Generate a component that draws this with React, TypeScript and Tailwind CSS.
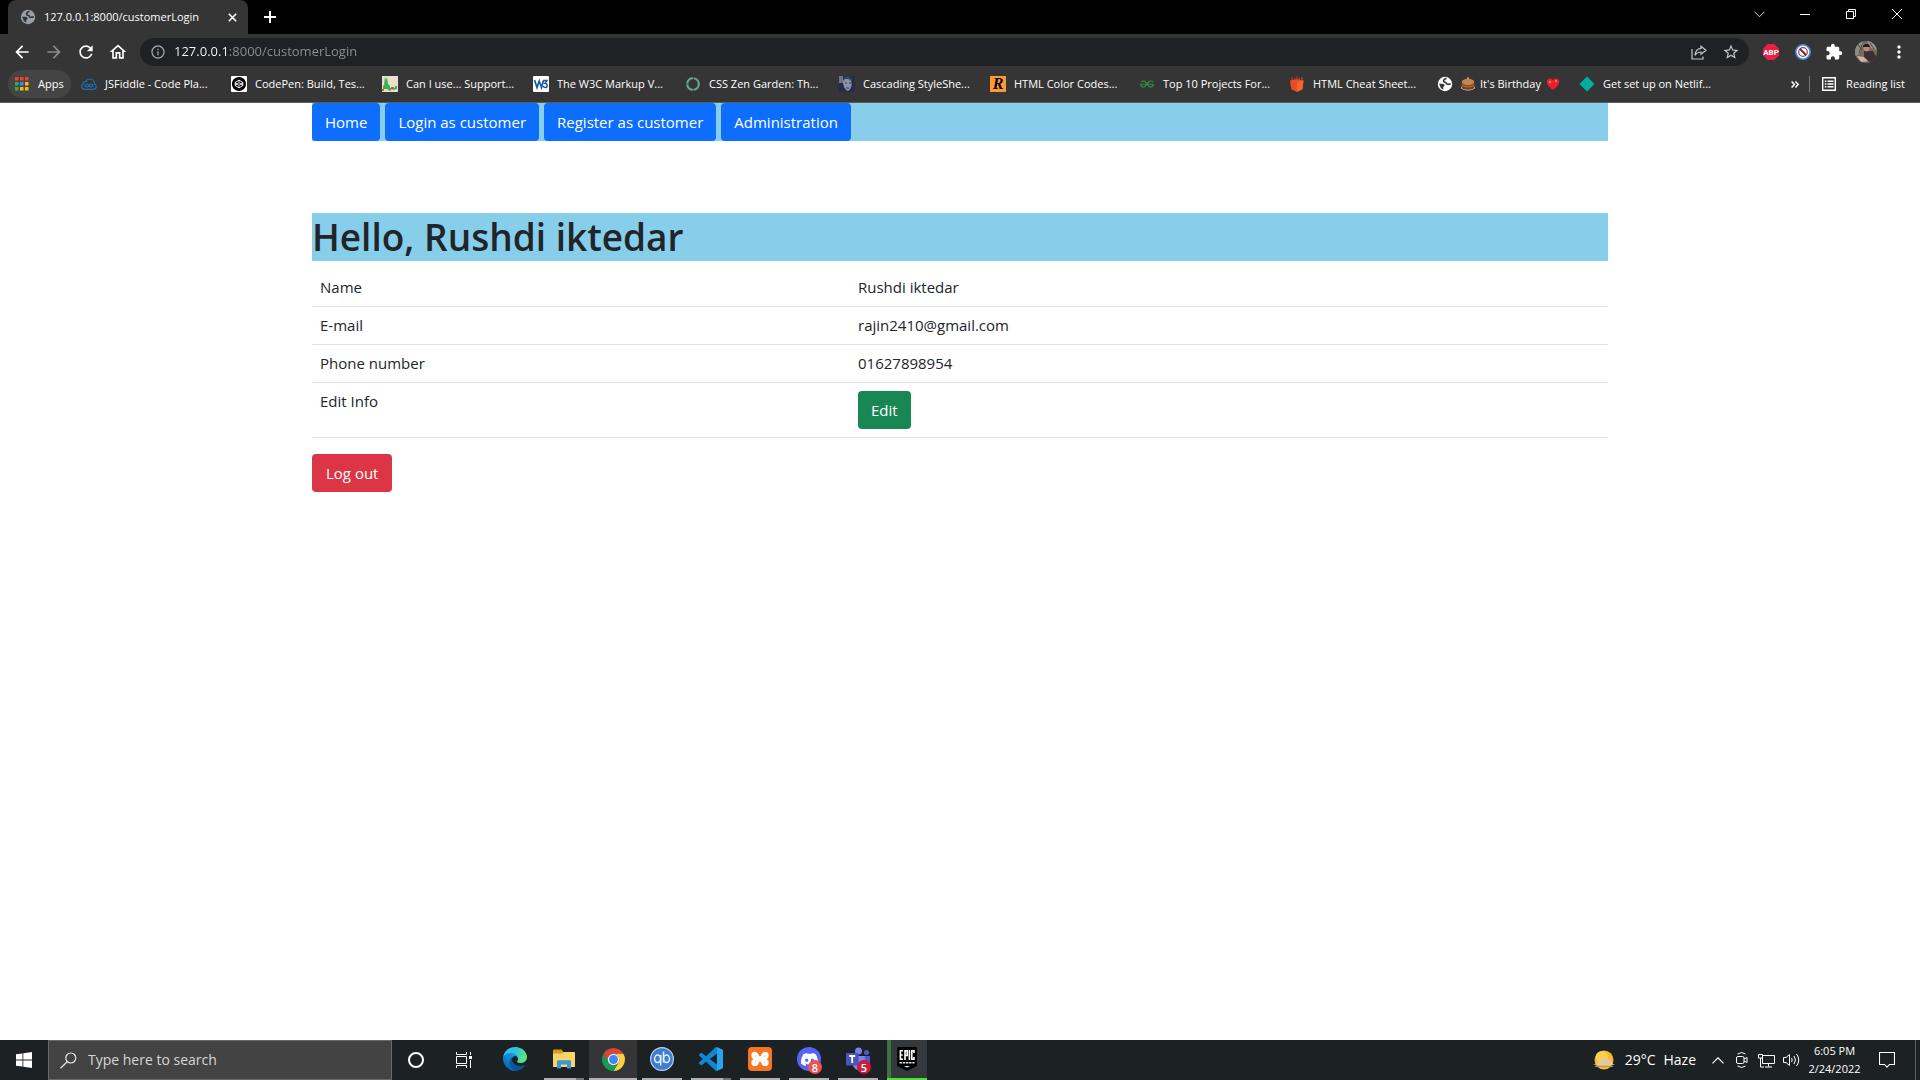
import type { ReactNode } from "react";
import {
  MdArrowBack,
  MdArrowForward,
  MdRefresh,
  MdOutlineHome,
  MdExtension,
  MdStarOutline,
  MdMoreVert,
  MdInfoOutline,
} from "react-icons/md";
import { SiCodepen, SiGeeksforgeeks, SiDiscord, SiXampp } from "react-icons/si";

function Globe({ size, color, ink }: { size: number; color: string; ink: string }) {
  return (
    <svg width={size} height={size} viewBox="0 0 16 16" className="shrink-0">
      <circle cx="8" cy="8" r="7.200" fill={color} />
      <path d="M9.500 2.300C7.500 3 6.300 4 6.600 5.200c.3 1.300 2.700.6 2.800 2.200 0 1.300 2.500 1 4.300.4" fill="none" stroke={ink} strokeWidth="1.600" />
      <path d="M2 7.800c2-.3 5.500-.2 5.700 1.400.1 1-1.400 1-1.500 2.100 0 1 .3 1.500.1 2.300L4 12.200z" fill={ink} />
    </svg>
  );
}

function AppsGrid() {
  const colors = ["#ea4335", "#ea4335", "#ea4335", "#34a853", "#4285f4", "#fbbc05", "#34a853", "#fbbc05", "#fbbc05"];
  return (
    <svg width="14" height="14" viewBox="0 0 14 14">
      {colors.map((c, i) => (
        <rect key={i} x={(i % 3) * 5} y={Math.floor(i / 3) * 5} width="3.500" height="3.500" fill={c} />
      ))}
    </svg>
  );
}

function JsFiddleIcon() {
  return (
    <svg width="16" height="16" viewBox="0 0 16 16" fill="none" stroke="#1f6fb5" strokeWidth="1.200">
      <path d="M3.800 13.300h8.500c1.700 0 3-1.200 3-2.800 0-1.200-.7-2.200-1.800-2.600C13.500 5 11.600 3 9 3 7.200 3 5.800 4 5 5.500c-1.300-.4-2.600.5-2.500 2C1.300 8 .7 9.200.7 10.300c0 1.700 1.400 3 3.100 3z" />
      <path d="M8 9.500c-.9-1-1.500-1.500-2.300-1.500-.9 0-1.500.7-1.500 1.500S4.800 11 5.700 11c.8 0 1.400-.5 2.300-1.500s1.500-1.500 2.300-1.500c.9 0 1.500.7 1.500 1.500s-.6 1.500-1.500 1.500c-.8 0-1.400-.5-2.300-1.500z" />
    </svg>
  );
}

function CanIUseIcon() {
  return (
    <svg width="16" height="16" viewBox="0 0 16 16">
      <rect width="16" height="16" fill="#e9dfcb" />
      <path d="M1 13V10l1-1 1-8 1 3 1-3 1 7 2 2v2h5v-2h2v3l-4 1-1-1-2 2-3-2z" fill="#3fae55" />
      <path d="M9 11h3v2H9zM0 13h2v2H0z" fill="#c9564a" />
    </svg>
  );
}

function W3Icon() {
  return (
    <svg width="16" height="16" viewBox="0 0 16 16">
      <rect width="16" height="16" rx="1" fill="#fff" />
      <path d="M1.500 4 4 11.500 6.200 5 8.500 11.500 10.500 4.500" fill="none" stroke="#17599c" strokeWidth="1.700" />
      <path d="M10 4.500h4L12 7.300c3 0 2.700 4.200.2 4.200-1 0-1.700-.5-2.200-1.300" fill="none" stroke="#17599c" strokeWidth="1.500" />
    </svg>
  );
}

function ZenIcon() {
  return (
    <svg width="16" height="16" viewBox="0 0 16 16">
      <circle cx="8" cy="8" r="5.800" fill="none" stroke="#6ea293" strokeWidth="2.200" strokeDasharray="8.300 .8" />
    </svg>
  );
}

function PortraitIcon() {
  return (
    <svg width="16" height="16" viewBox="0 0 16 16">
      <rect width="16" height="16" fill="#252d48" />
      <rect width="4" height="7" fill="#6c7385" />
      <path d="M4 5c1-3 7-4 8.500 0 .8 4-.5 8-3.500 10C5.500 14 4 9 4 5z" fill="#8d93a5" />
      <path d="M4 5c2-3 5-3 8 0l1 3V3L9 0 5 1z" fill="#3c445c" />
      <path d="M6 7h2M10 7h2M7 12h3" stroke="#343b52" />
    </svg>
  );
}

function RIcon() {
  return (
    <span className="flex size-4 items-center justify-center bg-[#ff9933] font-['Liberation_Serif',serif] text-base leading-4 font-bold text-black italic">
      R
    </span>
  );
}

function CheatIcon() {
  return (
    <svg width="16" height="16" viewBox="0 0 16 16">
      <path d="M1 4.500 8 3l6.500 1.500-1 8.800L8 16l-5.700-2.700z" fill="#e44d26" />
      <path d="M8 5.500 14.500 4.500l-1 8.800L8 16z" fill="#f16529" />
      <path d="M3 4V1.500M5.500 3.500V2M8 3.500V.5M10.500 3.500V1.500M13 4V1" stroke="#b5452a" strokeWidth="1.200" />
    </svg>
  );
}

function CakeIcon() {
  return (
    <svg width="14" height="14" viewBox="0 0 14 14" className="shrink-0">
      <ellipse cx="7" cy="10.500" rx="7" ry="3" fill="#d9d2c9" />
      <path d="M.8 5v5.500c0 3 12.400 3 12.400 0V5z" fill="#7a4120" />
      <ellipse cx="7" cy="5" rx="6.200" ry="3.200" fill="#c98743" />
      <path d="M.8 8q6.200 4 12.400 0" stroke="#b97a45" fill="none" />
      <path d="M7 5.500V2" stroke="#3fa6d8" strokeWidth="1.300" />
      <circle cx="7" cy="1.200" r="1" fill="#f7b32b" />
    </svg>
  );
}

function HeartIcon() {
  return (
    <svg width="14" height="14" viewBox="0 0 14 14" className="shrink-0">
      <path d="M7 13C2.500 9.500.5 7 .8 4.200 1.200 1 5.300.4 7 3.200 8.700.4 12.800 1 13.200 4.200 13.500 7 11.500 9.500 7 13z" fill="#ee1c2e" />
      <path d="M4 3l.6 1.400L6 5l-1.400.6L4 7l-.6-1.400L2 5l1.400-.6zM10 2.500l.5 1 1 .5-1 .5-.5 1-.5-1-1-.5 1-.5z" fill="#ff9c2e" />
    </svg>
  );
}

const bookmarks: { label: string; icon: ReactNode; width: string }[] = [
  { label: "JSFiddle - Code Pla...", icon: <JsFiddleIcon />, width: "w-[150px]" },
  {
    label: "CodePen: Build, Tes...",
    icon: (
      <span className="flex size-4 items-center justify-center rounded-[1px] bg-white text-black">
        <SiCodepen size={14} />
      </span>
    ),
    width: "w-[151px]",
  },
  { label: "Can I use... Support...", icon: <CanIUseIcon />, width: "w-[151px]" },
  { label: "The W3C Markup V...", icon: <W3Icon />, width: "w-[152px]" },
  { label: "CSS Zen Garden: Th...", icon: <ZenIcon />, width: "w-[154px]" },
  { label: "Cascading StyleShe...", icon: <PortraitIcon />, width: "w-[151px]" },
  { label: "HTML Color Codes...", icon: <RIcon />, width: "w-[149px]" },
  { label: "Top 10 Projects For...", icon: <SiGeeksforgeeks size={14} color="#2f8d46" />, width: "w-[150px]" },
  { label: "HTML Cheat Sheet...", icon: <CheatIcon />, width: "w-[148px]" },
];

function TabStrip() {
  return (
    <div className="flex h-[34px] items-stretch bg-black">
      <div className="ml-2 flex w-60 items-center rounded-t-lg bg-[#353535] pr-2 pl-3">
        <Globe size={16} color="#9aa0a6" ink="#353535" />
        <span className="ml-2 flex-1 text-[11px] whitespace-nowrap">127.0.0.1:8000/customerLogin</span>
        <button aria-label="Close tab" className="flex size-4 items-center justify-center">
          <svg width="9" height="9" viewBox="0 0 9 9" stroke="#fff" strokeWidth="1.600">
            <path d="M.8.8l7.400 7.400M8.200.8.800 8.200" />
          </svg>
        </button>
      </div>
      <button aria-label="New tab" className="ml-3 flex w-5 items-center justify-center">
        <svg width="12" height="12" viewBox="0 0 12 12" stroke="#fff" strokeWidth="2">
          <path d="M6 0v12M0 6h12" />
        </svg>
      </button>
      <div className="ml-auto flex h-7 items-center">
        <button aria-label="Search tabs" className="flex w-[46px] justify-center">
          <svg width="11" height="7" viewBox="0 0 11 7" fill="none" stroke="#ddd">
            <path d="M.5.7l5 5 5-5" />
          </svg>
        </button>
        <button aria-label="Minimize" className="flex w-[46px] justify-center">
          <span className="h-px w-2.5 bg-white" />
        </button>
        <button aria-label="Restore" className="flex w-[46px] justify-center">
          <svg width="10" height="10" viewBox="0 0 10 10" fill="none" stroke="#fff">
            <path d="M.5 2.500h7v7h-7zM2.500 2.500v-2h7v7h-2" />
          </svg>
        </button>
        <button aria-label="Close" className="flex w-[46px] justify-center">
          <svg width="10" height="10" viewBox="0 0 10 10" stroke="#fff">
            <path d="M0 0l10 10M10 0 0 10" />
          </svg>
        </button>
      </div>
    </div>
  );
}

function Toolbar() {
  return (
    <div className="flex h-9 items-center bg-[#353535]">
      <div className="flex w-[140px] items-center gap-3 pl-3">
        <button aria-label="Back">
          <MdArrowBack size={20} color="#fff" />
        </button>
        <button aria-label="Forward">
          <MdArrowForward size={20} color="#8a8a8a" />
        </button>
        <button aria-label="Reload">
          <MdRefresh size={20} color="#fff" />
        </button>
        <button aria-label="Home page">
          <MdOutlineHome size={20} color="#fff" />
        </button>
      </div>
      <div className="flex h-7 flex-1 items-center rounded-full bg-[#202124] pr-0.5 pl-2.5">
        <MdInfoOutline size={16} color="#9aa0a6" />
        <input
          aria-label="Address"
          defaultValue="127.0.0.1:8000/customerLogin"
          className="ml-2 flex-1 bg-linear-to-r from-white from-[53px] to-[#8f9094] to-[53px] bg-clip-text text-[13px] text-transparent outline-none"
        />
        <button aria-label="Share" className="flex size-8 items-center justify-center">
          <svg width="16" height="15" viewBox="0 0 16 15" fill="none" stroke="#c4c7c5" strokeWidth="1.200">
            <path d="M1 4v10h11v-2.500" />
            <path d="M10 1.200 15 5.200 10 9.200V7C7.500 7 5.500 8 4 10.300 4.300 6.500 6.500 3.800 10 3.400z" />
          </svg>
        </button>
        <button aria-label="Bookmark this page" className="flex size-8 items-center justify-center">
          <MdStarOutline size={18} color="#c4c7c5" />
        </button>
      </div>
      <div className="flex items-center pr-[11px] pl-3.5">
        <button aria-label="Adblock" className="mr-4">
          <svg width="16" height="16" viewBox="0 0 16 16">
            <path d="M4.700 0h6.600L16 4.700v6.600L11.300 16H4.700L0 11.300V4.700z" fill="#ed1e45" />
            <text x="8" y="11" textAnchor="middle" fontSize="8" fontWeight="700" fill="#fff" fontFamily="Roboto, sans-serif">
              ABP
            </text>
          </svg>
        </button>
        <button aria-label="Blocker" className="mr-3.5">
          <svg width="16" height="16" viewBox="0 0 16 16">
            <circle cx="8" cy="8" r="7.200" fill="#f6f9fc" stroke="#3f86d6" strokeWidth="1.600" />
            <circle cx="8" cy="8" r="4.300" fill="#fff" stroke="#b0413c" strokeWidth="1.200" />
            <path d="M5 5l6 6" stroke="#5a2b3c" strokeWidth="1.800" />
          </svg>
        </button>
        <button aria-label="Extensions" className="mr-3">
          <MdExtension size={18} color="#fff" />
        </button>
        <button aria-label="Profile" className="mr-3">
          <svg width="22" height="22" viewBox="0 0 22 22">
            <defs>
              <clipPath id="avatar">
                <circle cx="11" cy="11" r="11" />
              </clipPath>
            </defs>
            <g clipPath="url(#avatar)">
              <rect width="22" height="22" fill="#746b62" />
              <path d="M0 0h8L5 12 0 16z" fill="#8f8d80" />
              <path d="M12 0h10v9l-6-2z" fill="#9a978a" />
              <path d="M2 2l5 7M15 2l4 6M4 12l3-8" stroke="#4a4640" />
              <path d="M9 10h9l4 7-4 5-9-4z" fill="#3b3032" />
              <circle cx="11.500" cy="7.500" r="3" fill="#b98a72" />
              <path d="M8 6c0-4 7-4 7 0z" fill="#221c1b" />
              <path d="M2 15l7 1 4 4-7 1z" fill="#d9b3a1" />
            </g>
          </svg>
        </button>
        <button aria-label="Menu">
          <MdMoreVert size={20} color="#fff" />
        </button>
      </div>
    </div>
  );
}

function BookmarkBar() {
  return (
    <nav aria-label="Bookmarks" className="flex h-[33px] items-start border-b border-[#5c5c5c] bg-[#353535] text-[11px] whitespace-nowrap">
      <a href="#apps" className="mr-[10px] ml-2 flex h-7 w-[63px] items-center gap-[9px] rounded-full bg-[#444] pl-[7px]">
        <AppsGrid />
        Apps
      </a>
      {bookmarks.map((b) => (
        <a key={b.label} href="#bookmark" className={`flex h-7 shrink-0 items-center gap-2 ${b.width}`}>
          <span className="flex size-4 shrink-0 items-center justify-center">{b.icon}</span>
          {b.label}
        </a>
      ))}
      <a href="#birthday" className="flex h-7 w-[142px] shrink-0 items-center">
        <Globe size={16} color="#fff" ink="#353535" />
        <span className="ml-2 flex items-center gap-[5px]">
          <CakeIcon />
          It's Birthday
          <HeartIcon />
        </span>
      </a>
      <a href="#netlify" className="flex h-7 shrink-0 items-center gap-2">
        <svg width="16" height="16" viewBox="0 0 16 16">
          <path d="M8 .5 15.500 8 8 15.500.5 8z" fill="#00ad9f" />
        </svg>
        Get set up on Netlif...
      </a>
      <div className="ml-auto flex h-7 items-center">
        <button aria-label="More bookmarks" className="mr-2.5">
          <svg width="8" height="7" viewBox="0 0 8 7" fill="none" stroke="#fff" strokeWidth="1.500">
            <path d="M.6.6l2.800 2.900L.6 6.400M4.400.6l2.800 2.900-2.800 2.900" />
          </svg>
        </button>
        <span className="h-4 w-px bg-[#777]" />
        <button className="mr-[15px] ml-3 flex items-center gap-2.5">
          <svg width="14" height="14" viewBox="0 0 14 14" fill="none" stroke="#fff" strokeWidth="1.400">
            <path d="M.7.7h12.600v12.600H.7z" />
            <path d="M2.800 4.200h1.600M2.800 7h1.600M2.800 9.800h1.600M5.500 4.200h6M5.500 7h6M5.500 9.800h6" />
          </svg>
          Reading list
        </button>
      </div>
    </nav>
  );
}

const pages = ["Home", "Login as customer", "Register as customer", "Administration"];

function CustomerPage() {
  return (
    <main className="mx-auto w-full max-w-[1296px] flex-1 text-[15px] text-[#212529]">
      <nav aria-label="Site" className="mb-[72px] flex gap-[5px] bg-[#87ceeb]">
        {pages.map((p) => (
          <a key={p} href="#page" className="rounded bg-[#0d6efd] px-[13px] py-[7px] leading-6 text-white">
            {p}
          </a>
        ))}
      </nav>
      <h1 className="mb-2 bg-[#87ceeb] text-[37px] leading-[48px] font-semibold">Hello, Rushdi iktedar</h1>
      <table className="mb-4 w-full text-left leading-[21px]">
        <tbody className="[&_td]:p-2 [&_th]:w-[538px] [&_th]:p-2 [&_th]:align-top [&_th]:font-normal [&_tr]:border-b [&_tr]:border-[#dee2e6]">
          <tr>
            <th scope="row">Name</th>
            <td>Rushdi iktedar</td>
          </tr>
          <tr>
            <th scope="row">E-mail</th>
            <td>rajin2410@gmail.com</td>
          </tr>
          <tr>
            <th scope="row">Phone number</th>
            <td>01627898954</td>
          </tr>
          <tr>
            <th scope="row">Edit Info</th>
            <td>
              <button className="block rounded bg-[#198754] px-[13px] py-[7px] leading-6 text-white">Edit</button>
            </td>
          </tr>
        </tbody>
      </table>
      <button className="rounded bg-[#dc3545] px-3.5 py-[7px] leading-6 text-white">Log out</button>
    </main>
  );
}

function EdgeIcon() {
  return (
    <svg width="24" height="24" viewBox="0 0 256 256">
      <defs>
        <linearGradient id="edgeA" x1="60" y1="178" x2="241" y2="178" gradientUnits="userSpaceOnUse">
          <stop offset="0" stopColor="#0c59a4" />
          <stop offset="1" stopColor="#114a8b" />
        </linearGradient>
        <linearGradient id="edgeB" x1="160" y1="100" x2="46" y2="223" gradientUnits="userSpaceOnUse">
          <stop offset="0" stopColor="#1b9de2" />
          <stop offset="0.500" stopColor="#1387d2" />
          <stop offset="1" stopColor="#0669bc" />
        </linearGradient>
        <linearGradient id="edgeC" x1="20" y1="60" x2="250" y2="130" gradientUnits="userSpaceOnUse">
          <stop offset="0" stopColor="#35c1f1" />
          <stop offset="0.450" stopColor="#2fc2df" />
          <stop offset="1" stopColor="#66eb6e" />
        </linearGradient>
      </defs>
      <path
        d="M231 190.500c-3.400 1.800-6.900 3.400-10.500 4.700a101.500 101.500 0 0 1-35.900 6.400c-47.300 0-88.500-32.500-88.500-74.300 0-11.400 6.300-21.900 16.400-27.300-42.800 1.800-53.800 46.400-53.800 72.500 0 73.900 68.100 81.400 82.800 81.400 7.900 0 19.800-2.300 27-4.600l1.300-.4a128.300 128.300 0 0 0 66.600-52.800 4 4 0 0 0-5.400-5.600z"
        fill="url(#edgeA)"
      />
      <path
        d="M105.700 241.400a79.200 79.200 0 0 1-22.700-21.300 80.700 80.700 0 0 1 29.500-120c3.200-1.500 8.500-4.200 15.600-4.100a32.400 32.400 0 0 1 25.700 13 31.900 31.900 0 0 1 6.300 18.700c0-.2 24.500-79.600-80-79.600-43.900 0-80 41.700-80 78.200 0 19.300 4.500 38.400 12.800 56A128 128 0 0 0 169.400 247.400a75.800 75.800 0 0 1-63.600-6z"
        fill="url(#edgeB)"
      />
      <path
        d="M152.300 148.900c-.8 1-3.300 2.500-3.300 5.700 0 2.600 1.700 5.100 4.700 7.200 14.400 10 41.500 8.700 41.600 8.700 10.700 0 21.100-2.900 30.300-8.300A61.400 61.400 0 0 0 256 109.300c.3-22.400-8-37.300-11.300-43.900C223.500 23.900 177.700 0 128 0 58 0 1 56.200 0 126.200c.5-36.500 36.800-66 80-66 3.500 0 23.500.3 42 10.100 16.300 8.500 24.900 18.900 30.800 29.200 6.200 10.700 7.300 24.100 7.300 29.500s-2.700 13.300-7.800 19.900z"
        fill="url(#edgeC)"
      />
    </svg>
  );
}

function ExplorerIcon() {
  return (
    <svg width="22" height="20" viewBox="0 0 22 20">
      <path d="M0 1.500C0 1 .4.600 1 .6h7.500l1.500 2V6H0z" fill="#d99a1c" />
      <path d="M0 4.500h9l1.500-1.500H21c.6 0 1 .4 1 1V18H0z" fill="#fcd364" />
      <path d="M4 19.500v-7c0-.8.500-1.300 1.300-1.300h11.400c.8 0 1.300.5 1.300 1.300v7h-4v-4H8v4z" fill="#3a96dd" />
    </svg>
  );
}

function ChromeIcon() {
  return (
    <svg width="23" height="23" viewBox="2 2 44 44">
      <path d="M24 13h19A22 22 0 0 0 5 13l9.500 16.500A11 11 0 0 1 24 13z" fill="#db4437" />
      <path d="M43 13A22 22 0 0 1 24 46l9.500-16.500A11 11 0 0 0 24 13z" fill="#ffcd40" />
      <path d="M24 46A22 22 0 0 1 5 13l9.500 16.500a11 11 0 0 0 19 0z" fill="#0f9d58" />
      <circle cx="24" cy="24" r="11" fill="#f1f1f1" />
      <circle cx="24" cy="24" r="8.500" fill="#4285f4" />
    </svg>
  );
}

function QbIcon() {
  return (
    <svg width="24" height="24" viewBox="0 0 24 24">
      <circle cx="12" cy="12" r="11.400" fill="#3d7fce" stroke="#b5d2f2" strokeWidth="1.200" />
      <g fill="none" stroke="#e4f0ff" strokeWidth="1.500">
        <ellipse cx="7.600" cy="11.800" rx="3" ry="3.800" />
        <path d="M10.700 8v10.500M13.500 4.500v11" />
        <ellipse cx="16.500" cy="11.800" rx="3" ry="3.800" />
      </g>
    </svg>
  );
}

function VsCodeIcon() {
  return (
    <svg width="24" height="24" viewBox="0 0 24 24">
      <path
        d="M23.150 2.587L18.210.210a1.494 1.494 0 0 0-1.705.290l-9.460 8.630-4.120-3.128a.999.999 0 0 0-1.276.057L.327 7.261A1 1 0 0 0 .326 8.740L3.899 12 .326 15.260a1 1 0 0 0 .001 1.479L1.650 17.940a.999.999 0 0 0 1.276.057l4.120-3.128 9.460 8.630a1.492 1.492 0 0 0 1.704.290l4.942-2.377A1.500 1.500 0 0 0 24 20.060V3.939a1.500 1.500 0 0 0-.850-1.352zm-5.146 14.861L10.826 12l7.178-5.448v10.896z"
        fill="#1187d0"
      />
      <path d="M18 .300 24 3v18l-6 2.700z" fill="#2ba4ee" />
    </svg>
  );
}

function TeamsIcon() {
  return (
    <svg width="24" height="24" viewBox="0 0 24 24">
      <circle cx="20.500" cy="5.500" r="2.500" fill="#5059c9" />
      <circle cx="12.500" cy="4" r="3.500" fill="#7b83eb" />
      <path d="M16 9h8v7c0 3-2 5-5 5z" fill="#5059c9" />
      <path d="M7 9h12v8c0 8-12 8-12 0z" fill="#7b83eb" />
      <rect y="6" width="12.500" height="12.500" rx="1" fill="#4b53bc" />
      <path d="M3.200 9h6M6.200 9v7" stroke="#fff" strokeWidth="1.800" />
    </svg>
  );
}

function Badge({ count, color }: { count: number; color: string }) {
  return (
    <span className={`absolute top-5 left-[23px] flex size-3.5 items-center justify-center rounded-full text-[11px] leading-none font-semibold text-white ${color}`}>
      {count}
    </span>
  );
}

const tasks: { name: string; icon: ReactNode; state: string }[] = [
  { name: "Microsoft Edge", icon: <EdgeIcon />, state: "closed" },
  { name: "File Explorer", icon: <ExplorerIcon />, state: "stacked" },
  { name: "Google Chrome", icon: <ChromeIcon />, state: "active" },
  { name: "qBittorrent", icon: <QbIcon />, state: "open" },
  { name: "Visual Studio Code", icon: <VsCodeIcon />, state: "stacked" },
  {
    name: "XAMPP",
    icon: (
      <span className="flex size-6 items-center justify-center rounded-sm bg-[#f37623] text-white">
        <svg width="18" height="16" viewBox="0 0 18 16" fill="none" stroke="#fff" strokeWidth="3.400" strokeLinejoin="round" strokeLinecap="round">
          <path d="M9 8 6.500 5.500C6 2 2 1.500 2 4.500 2 6.500 4 7 4.500 8 4 9 2 9.500 2 11.500c0 3 4 2.500 4.500-1L9 8l2.500-2.500C12 2 16 1.500 16 4.500c0 2-2 2.500-2.500 3.500.5 1 2.500 1.500 2.500 3.500 0 3-4 2.500-4.500-1z" />
        </svg>
      </span>
    ),
    state: "open",
  },
  {
    name: "Discord",
    icon: (
      <>
        <span className="flex size-6 items-center justify-center rounded-full bg-[#5865f2] text-white">
          <SiDiscord size={17} />
        </span>
        <Badge count={8} color="bg-[#ed5055]" />
      </>
    ),
    state: "open",
  },
  {
    name: "Teams",
    icon: (
      <>
        <TeamsIcon />
        <Badge count={5} color="bg-[#cc1a3a]" />
      </>
    ),
    state: "open",
  },
];

function TaskButton({ name, icon, state }: { name: string; icon: ReactNode; state: string }) {
  return (
    <button
      aria-label={name}
      className={`relative mr-px flex w-12 flex-col items-center ${state === "active" ? "bg-[#343536]" : ""}`}
    >
      <span className="flex h-[38px] items-center">{icon}</span>
      {state === "active" && <span className="h-0.5 w-full bg-[#b4b0b4]" />}
      {state === "open" && <span className="h-0.5 w-10 bg-[#b4b0b4]" />}
      {state === "stacked" && <span className="h-0.5 w-10 border-r-8 border-[#777577] bg-[#b4b0b4]" />}
    </button>
  );
}

function Taskbar() {
  return (
    <footer className="flex h-10 items-stretch bg-[#1c2124]">
      <button aria-label="Start" className="flex w-12 items-center justify-center">
        <svg width="16" height="16" viewBox="0 0 16 16" fill="#fff">
          <path d="M0 2.300 6.500 1.400v6.200H0zM7.300 1.300 16 0v7.600H7.300zM0 8.400h6.500v6.200L0 13.700zM7.300 8.400H16V16l-8.700-1.300z" />
        </svg>
      </button>
      <label className="flex w-[344px] items-center border border-[#696969] bg-[#434343] pl-[11px]">
        <svg width="17" height="17" viewBox="0 0 17 17" fill="none" stroke="#e8e8e8" strokeWidth="1.200">
          <circle cx="10.800" cy="6" r="5" />
          <path d="M7.200 9.700.5 16.300" />
        </svg>
        <input
          aria-label="Search"
          placeholder="Type here to search"
          className="ml-[11px] min-w-0 flex-1 text-sm outline-none placeholder:text-[#d6d6d6]"
        />
      </label>
      <button aria-label="Cortana" className="flex w-12 items-center justify-center">
        <span className="size-4 rounded-full border-2 border-white" />
      </button>
      <button aria-label="Task view" className="mr-[3px] flex w-12 items-center justify-center">
        <svg width="16" height="16" viewBox="0 0 16 16" fill="none" stroke="#fff">
          <path d="M.5 4.500h10v7H.5zM.5 0v2.500h10V0M.5 16v-2.500h10V16M14.500 0v3M14.500 8v8" />
          <path d="M13 4h3v3h-3z" fill="#fff" stroke="none" />
        </svg>
      </button>
      {tasks.map((t) => (
        <TaskButton key={t.name} {...t} />
      ))}
      <button
        aria-label="Epic Games"
        className="ml-1 flex w-10 flex-col border-b-2 border-[#4fe03a] bg-linear-to-r from-[#3f7440] from-[4px] to-[#33393d] to-[4px]"
      >
        <span className="flex h-[38px] w-full items-center justify-center">
          <svg width="22" height="24" viewBox="0 0 22 24">
            <path d="M1 1.500C1 .7 1.700 0 2.500 0h17c.8 0 1.500.7 1.500 1.500V19L11 24 1 19z" fill="#000" />
            <g fill="none" stroke="#fff" strokeWidth="1.600">
              <path d="M7 3.800H4.400v8.400H7M4.400 8h2.200M9 13V3.800h2.200V8.500H9M13.400 3V13M18 6V3.800h-2.200v8.400H18V10" />
            </g>
            <path d="M3.500 15.700h15" stroke="#ddd" strokeWidth="1.600" strokeDasharray="2.500 .7" />
            <path d="M8 19h6l-3 1.600z" fill="#eee" />
          </svg>
        </span>
      </button>
      <div className="ml-auto flex items-center text-white">
        <button className="flex items-center text-sm">
          <svg width="22" height="20" viewBox="0 0 22 20" className="mr-2.5">
            <circle cx="11" cy="10" r="9.500" fill="#fcb827" />
            <circle cx="9" cy="7" r="6" fill="#ffd04f" />
            <path d="M0 15c2-.8 3-1 4-1 .5-3 3-4 5-3.500 1.500-3 7-2.500 8 .8 2 .2 2.500 1.500 2.500 2.400L22 15z" fill="#dcc9ae" />
            <path d="M2 16.500h18" stroke="#a99984" />
          </svg>
          29°C
          <span className="ml-2">Haze</span>
        </button>
        <button aria-label="Show hidden icons" className="ml-4">
          <svg width="12" height="7" viewBox="0 0 12 7" fill="none" stroke="#fff" strokeWidth="1.200">
            <path d="M.5 6.300 6 .8l5.500 5.500" />
          </svg>
        </button>
        <button aria-label="Meet now" className="ml-3">
          <svg width="12" height="16" viewBox="0 0 12 16" fill="none" stroke="#fff">
            <rect x=".5" y="4.500" width="7.500" height="7" rx="1.500" />
            <path d="M8 7l3-1.500v5L8 9M1.500 2Q5.500-1 9.500 2M1.500 14q4 3 8 0" />
          </svg>
        </button>
        <button aria-label="Network" className="ml-2.5">
          <svg width="17" height="15" viewBox="0 0 17 15" fill="none" stroke="#fff">
            <path d="M4.500 2.500h12v8h-12zM10.500 10.500v3M7 14h7M2.500 5v9H6" />
            <path d="M.5 1.500h4v3.500h-4z" fill="#1c2124" />
          </svg>
        </button>
        <button aria-label="Volume" className="ml-2">
          <svg width="17" height="14" viewBox="0 0 17 14" fill="none" stroke="#fff">
            <path d="M.5 4.500h2.500L6.500 1.500v11L3 9.500H.5zM8.500 5q1.500 2 0 4M11 3q3 4 0 8M13.500 1q4.500 6 0 12" />
          </svg>
        </button>
        <button className="ml-1.5 w-[57px] text-center text-[11px] leading-[18px] whitespace-nowrap">
          6:05 PM
          <br />
          2/24/2022
        </button>
        <button aria-label="Notifications" className="ml-4">
          <svg width="16" height="16" viewBox="0 0 16 16" fill="none" stroke="#fff" strokeWidth="1.100">
            <path d="M.5.500h15v12h-5L8 15.200 5.500 12.500h-5z" />
          </svg>
        </button>
        <span className="mr-1 ml-5 h-10 w-px bg-[#5c6164]" />
      </div>
    </footer>
  );
}

export default function App() {
  return (
    <div className="flex min-h-screen flex-col bg-white font-['Open_Sans','Noto_Sans',sans-serif]">
      <header className="text-white">
        <TabStrip />
        <Toolbar />
        <BookmarkBar />
      </header>
      <CustomerPage />
      <Taskbar />
    </div>
  );
}
